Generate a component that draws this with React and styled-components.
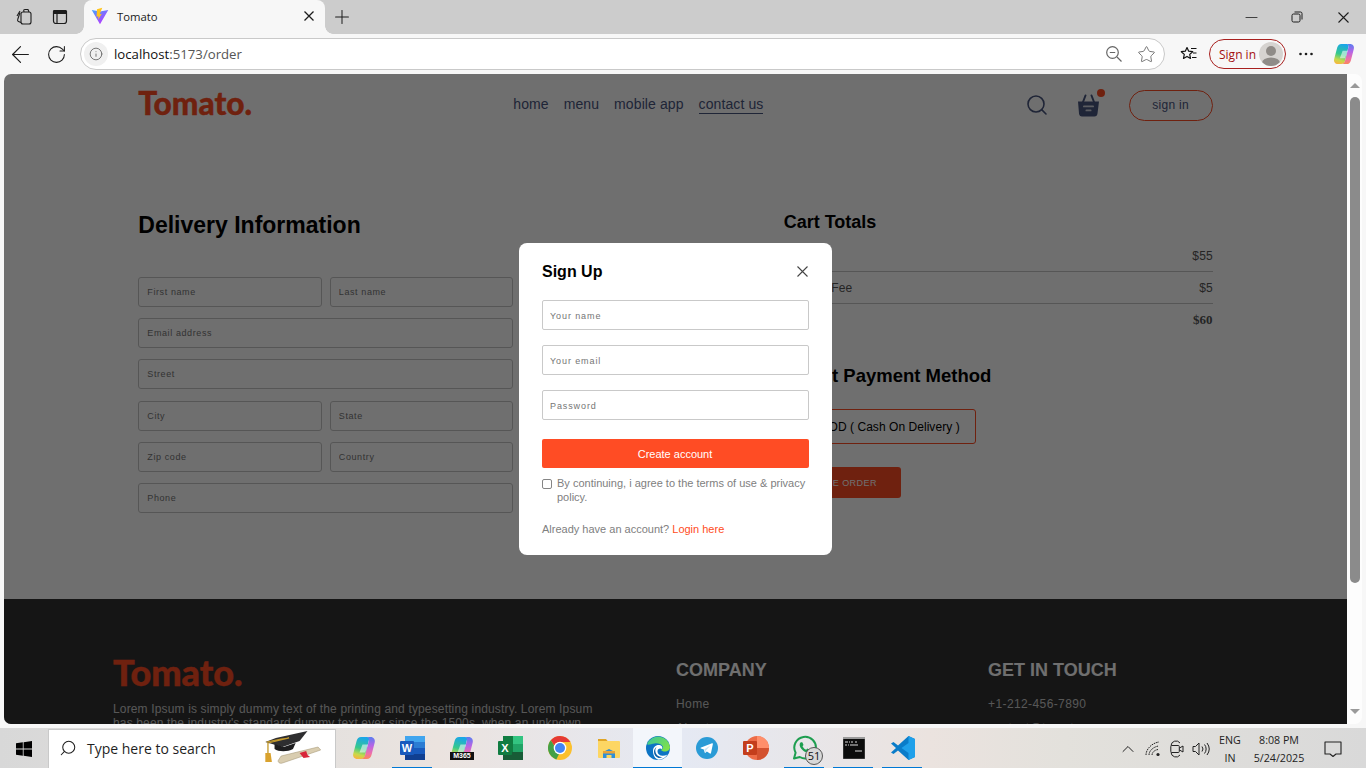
import React from 'react';
import styled, { createGlobalStyle } from 'styled-components';
import { ArrowLeft, RotateCw, Info, Star, Plus, Minus, Search, ChevronUp } from 'lucide-react';

const TOMATO = '#ff4c24';
const NAVY = '#49557e';

const GlobalStyle = createGlobalStyle`
  * { box-sizing: border-box; }
  html, body { margin: 0; padding: 0; overflow: hidden; background: #f7f7f7; }
  body { font-family: "Liberation Sans", Arial, sans-serif; }
`;

const Screen = styled.div`
  width: 1366px;
  height: 768px;
  display: flex;
  flex-direction: column;
  overflow: hidden;
`;

/* browser chrome */
const TabStrip = styled.div`
  height: 34px;
  background: #cccccc;
  display: flex;
  align-items: stretch;
  flex: none;
`;

const StripButton = styled.div`
  width: ${props => props.$w || 36}px;
  display: flex;
  align-items: center;
  justify-content: center;
  color: #1c1c1c;
`;

const StripLeft = styled.div`
  display: flex;
  width: 84px;
  padding-left: 6px;
`;

const Tab = styled.div`
  position: relative;
  width: 241px;
  background: #f7f7f7;
  border-radius: 8px 8px 0 0;
  display: flex;
  align-items: center;
  padding: 0 11px 2px 7px;
  gap: 8px;
  font: 11.3px "Open Sans", sans-serif;
  color: #1a1a1a;

  &::before, &::after {
    content: '';
    position: absolute;
    bottom: 0;
    width: 8px;
    height: 8px;
  }
  &::before {
    left: -8px;
    background: radial-gradient(circle at 0 0, transparent 7.5px, #f7f7f7 8px);
  }
  &::after {
    right: -8px;
    background: radial-gradient(circle at 100% 0, transparent 7.5px, #f7f7f7 8px);
  }
`;

const TabTitle = styled.span`
  flex: 1;
`;

const WindowButtons = styled.div`
  margin-left: auto;
  display: flex;
`;

const Toolbar = styled.div`
  height: 40px;
  flex: none;
  background: #f7f7f7;
  display: flex;
  align-items: center;
  padding: 0 4px 0 2px;
`;

const ToolButton = styled.div`
  flex: none;
  width: ${props => props.$w || 36}px;
  display: flex;
  align-items: center;
  justify-content: center;
  color: ${props => props.$color || '#1c1c1c'};
`;

const AddressBar = styled.div`
  flex: none;
  width: 1085px;
  height: 32px;
  margin: 0 6px;
  background: #fff;
  border: 1px solid #c9c9c9;
  border-radius: 16px;
  display: flex;
  align-items: center;
  padding: 0 2px 0 3px;
  font: 13.2px "Open Sans", sans-serif;
`;

const InfoBubble = styled.div`
  width: 24px;
  height: 24px;
  border-radius: 50%;
  background: #f0f0f0;
  display: flex;
  align-items: center;
  justify-content: center;
  color: #666;
  margin-right: 6px;
`;

const UrlHost = styled.span`
  color: #111;
`;

const UrlRest = styled.span`
  color: #555;
  flex: 1;
`;

const SignInPill = styled.div`
  flex: none;
  width: 77px;
  height: 30px;
  margin-left: 2px;
  border: 1px solid #a8201f;
  border-radius: 15px;
  display: flex;
  align-items: center;
  justify-content: space-between;
  padding: 0 2px 0 9px;
  font: 12px "Open Sans", sans-serif;
  color: #a30f0f;
`;

const Avatar = styled.div`
  width: 24px;
  height: 24px;
  border-radius: 50%;
  background: #d6d3d0;
  overflow: hidden;
  display: flex;
`;

/* viewport */
const Viewport = styled.div`
  flex: none;
  height: 654px;
  display: flex;
  padding: 0 4px 4px;
  background: #f7f7f7;
`;

const Page = styled.div`
  position: relative;
  width: 1343px;
  height: 650px;
  overflow: hidden;
  background: #fff;
  border-radius: 7px 0 0 7px;
`;

const Scrollbar = styled.div`
  width: 15px;
  background: #fdfdfd;
  border-radius: 0 7px 7px 0;
  display: flex;
  flex-direction: column;
  align-items: center;
  padding: 9px 0 10px;
`;

const ScrollArrow = styled.div`
  width: 0;
  height: 0;
  border-left: 5px solid transparent;
  border-right: 5px solid transparent;
  ${props => props.$up ? 'border-bottom: 5px solid #9a9a9a;' : 'border-top: 5px solid #9a9a9a;'}
`;

const ScrollThumb = styled.div`
  width: 10px;
  height: 486px;
  margin: 9px 0 auto;
  border-radius: 5px;
  background: #8b8b8b;
`;

/* site */
const Navbar = styled.nav`
  width: 80%;
  height: 62px;
  margin: 0 auto;
  display: flex;
  align-items: center;
  justify-content: space-between;
`;

const Logo = styled.div`
  font-family: Lato, sans-serif;
  font-weight: 900;
  font-size: ${props => props.$size}px;
  line-height: 1;
  -webkit-text-stroke: 0.4px ${TOMATO};
  color: ${TOMATO};
`;

const NavLogo = styled(Logo)`
  margin-bottom: 3px;
`;

const NavLinks = styled.ul`
  list-style: none;
  margin: 0;
  padding: 0;
  display: flex;
  gap: 15px;
  color: ${NAVY};
  font-size: 14px;
  letter-spacing: 0.1px;
`;

const NavLink = styled.li`
  padding-bottom: 1px;
  border-bottom: 1px solid ${props => props.$active ? NAVY : 'transparent'};
`;

const NavRight = styled.div`
  display: flex;
  align-items: center;
  gap: 29px;
`;

const NavSearch = styled(Search)`
  margin-right: -1px;
`;

const BasketWrap = styled.div`
  position: relative;
  display: flex;
`;

const BasketDot = styled.span`
  position: absolute;
  top: -5px;
  right: -5px;
  width: 8px;
  height: 8px;
  border-radius: 50%;
  background: ${TOMATO};
`;

const NavSignIn = styled.button`
  width: 84px;
  height: 31px;
  background: transparent;
  border: 1px solid ${TOMATO};
  border-radius: 50px;
  color: ${NAVY};
  font: 12px "Liberation Sans", sans-serif;
  letter-spacing: 0.3px;
  padding: 0;
`;

const OrderForm = styled.main`
  width: 80%;
  height: 463px;
  margin: 0 auto;
  padding-top: 74px;
  display: flex;
  justify-content: space-between;
  align-items: flex-start;
`;

const DeliveryColumn = styled.section`
  width: 375px;
`;

const DeliveryTitle = styled.h2`
  margin: 0 0 37px;
  font-size: 23px;
  line-height: 30px;
  font-weight: 700;
  color: #000;
`;

const Fields = styled.div`
  display: grid;
  grid-template-columns: 1fr 1fr;
  gap: 11.2px 8px;
`;

const Field = styled.input`
  width: 100%;
  height: 30px;
  grid-column: ${props => props.$wide ? '1 / -1' : 'auto'};
  border: 1px solid #c5c5c5;
  border-radius: 3px;
  background: transparent;
  padding: 0 8px;
  font: 9px "Liberation Sans", sans-serif;
  letter-spacing: 0.6px;
  outline: none;
  &::placeholder { color: #757575; opacity: 1; }
`;

const CartColumn = styled.section`
  width: 429px;
`;

const CartTitle = styled.h2`
  margin: 0;
  font-size: ${props => props.$size || 18}px;
  line-height: 24px;
  font-weight: 700;
  color: #000;
`;

const CartRows = styled.div`
  margin: 6px 0 29px;
`;

const CartRow = styled.div`
  height: ${props => props.$last ? 31 : 32}px;
  display: flex;
  align-items: center;
  justify-content: space-between;
  font-size: 12px;
  letter-spacing: 0.1px;
  color: #555;
  border-bottom: ${props => props.$last ? 'none' : '1px solid #c5c5c5'};
`;

const TotalRow = styled(CartRow)`
  font-family: "Liberation Serif", serif;
  font-weight: 700;
  font-size: 13px;
  color: #555;
`;

const PayButton = styled.div`
  width: 192px;
  height: 35px;
  margin: 21px 0 23px;
  border: 1px solid ${TOMATO};
  border-radius: 3px;
  display: flex;
  align-items: center;
  justify-content: flex-end;
  padding-right: 15px;
  font-size: 12px;
  letter-spacing: 0.05px;
  color: #000;
`;

const RadioDot = styled.span`
  width: 12px;
  height: 12px;
  border-radius: 50%;
  background: ${TOMATO};
  margin-right: 6px;
  flex: none;
`;

const PlaceOrder = styled.button`
  width: 117px;
  height: 31px;
  background: ${TOMATO};
  border: none;
  border-radius: 3px;
  color: #fff;
  font: 9px "Liberation Sans", sans-serif;
  letter-spacing: 0.45px;
  padding: 0;
`;

const Footer = styled.footer`
  background: #323232;
  color: #c8c8c8;
  height: 300px;
  padding: 55px 0 0 109px;
  display: grid;
  grid-template-columns: 483px 232px 1fr;
  column-gap: 80px;
  align-items: start;
`;

const FooterText = styled.p`
  margin: 12px 0 0;
  font-size: 12px;
  line-height: 14.4px;
  letter-spacing: 0.15px;
`;

const FooterHead = styled.h2`
  margin: 5px 0 0;
  font-size: 18px;
  line-height: 22px;
  color: #fff;
  font-weight: 700;
`;

const FooterList = styled.ul`
  list-style: none;
  margin: 16px 0 0;
  padding: 0;
  display: flex;
  flex-direction: column;
  gap: 10px;
  font-size: 12px;
  line-height: 14px;
  letter-spacing: 0.4px;
`;

const Overlay = styled.div`
  position: absolute;
  inset: 0;
  background: rgba(0, 0, 0, 0.565);
  display: grid;
  place-items: center;
`;

const Modal = styled.form`
  width: 313px;
  height: 312px;
  background: #fff;
  border-radius: 8px;
  padding: 18px 23px 0;
  display: flex;
  flex-direction: column;
`;

const ModalHead = styled.div`
  display: flex;
  align-items: center;
  justify-content: space-between;
  height: 22px;
  margin-bottom: 17px;
  color: #000;
  font-size: 16px;
  font-weight: 700;
`;

const ModalClose = styled.span`
  display: flex;
  margin: 0 1px 2px 0;
`;

const ModalFields = styled.div`
  display: flex;
  flex-direction: column;
  gap: 15px;
`;

const ModalField = styled.input`
  height: 30px;
  width: 100%;
  border: 1px solid #c9c9c9;
  border-radius: 2px;
  padding: 1px 7px 0;
  font: 9px "Liberation Sans", sans-serif;
  letter-spacing: 0.9px;
  outline: none;
  &::placeholder { color: #757575; opacity: 1; }
`;

const CreateButton = styled.button`
  height: 29px;
  margin-top: 19px;
  background: ${TOMATO};
  color: #fff;
  border: none;
  border-radius: 2px;
  font: 11px "Liberation Sans", sans-serif;
  padding: 0 1px 0 0;
`;

const Agree = styled.label`
  display: flex;
  gap: 5px;
  margin-top: 8px;
  font-size: 11px;
  line-height: 14px;
  color: #808080;
`;

const AgreeBox = styled.span`
  width: 10px;
  height: 10px;
  margin-top: 3px;
  border: 1px solid #858585;
  border-radius: 2px;
  flex: none;
`;

const LoginLine = styled.p`
  margin: 18px 0 0;
  font-size: 11px;
  line-height: 14px;
  color: #808080;
`;

const LoginLink = styled.span`
  color: ${TOMATO};
`;

/* taskbar */
const Taskbar = styled.div`
  flex: 1;
  display: flex;
  align-items: stretch;
  background: linear-gradient(90deg, #d8d8d8 0, #e6e2df 26%, #ebe3df 32%, #e5e9f3 50%, #ebe3df 68%, #e3e1dc 78%, #d9d9d9 100%);
`;

const StartButton = styled.div`
  width: 48px;
  display: flex;
  align-items: center;
  justify-content: center;
`;

const SearchBox = styled.div`
  width: 288px;
  margin-top: 1px;
  background: #fff;
  border: 1px solid #c9c9c9;
  display: flex;
  align-items: center;
  padding: 0 13px 2px 10px;
  font: 14px "Open Sans", sans-serif;
  color: #1f1f1f;
`;

const SearchText = styled.span`
  margin-left: 10px;
  flex: 1;
`;

const MirroredSearch = styled(Search)`
  transform: scaleX(-1);
`;

const TaskIcons = styled.div`
  display: flex;
  margin-left: 3px;
`;

const TaskIcon = styled.div`
  position: relative;
  width: 49px;
  display: flex;
  align-items: center;
  justify-content: center;
  padding-bottom: 2px;
  background: ${props => props.$active ? '#f3f6fb' : 'transparent'};
  &::after {
    content: '';
    display: ${props => props.$open ? 'block' : 'none'};
    position: absolute;
    left: ${props => props.$active ? 0 : 4}px;
    right: ${props => props.$active ? 0 : 5}px;
    bottom: 0;
    height: 2px;
    background: #0078d4;
  }
`;

const Badge = styled.span`
  position: absolute;
  right: 6px;
  bottom: 4px;
  width: 18px;
  height: 18px;
  border-radius: 50%;
  background: #d8d8d8;
  border: 1px solid #555;
  font: 11px "Open Sans", sans-serif;
  line-height: 16px;
  text-align: center;
  color: #111;
`;

const M365Tag = styled.span`
  position: absolute;
  left: 13px;
  bottom: 9px;
  width: 24px;
  height: 8px;
  background: #111;
  color: #fff;
  font: 700 7px/8px "Liberation Sans", sans-serif;
  text-align: center;
`;

const Tray = styled.div`
  margin-left: auto;
  display: flex;
  align-items: center;
  color: #222;
`;

const TrayItem = styled.div`
  width: ${props => props.$w}px;
  display: flex;
  align-items: center;
  justify-content: center;
`;

const TrayText = styled.div`
  width: ${props => props.$w}px;
  text-align: center;
  font: 10.7px/18px "Open Sans", sans-serif;
  color: #222;
`;

/* drawn icons */
const CloseGlyph = ({ size = 11, color = '#1c1c1c', width = 1.1 }) => (
  <svg width={size} height={size} viewBox={`0 0 ${size} ${size}`} stroke={color} strokeWidth={width} fill="none">
    <path d={`M0.500 0.500L${size - 0.5} ${size - 0.5}M${size - 0.5} 0.500L0.500 ${size - 0.5}`} />
  </svg>
);

const DotsIcon = () => (
  <svg width="14" height="4" viewBox="0 0 14 4" fill="#1c1c1c">
    <circle cx="1.500" cy="2" r="1.300" />
    <circle cx="7" cy="2" r="1.300" />
    <circle cx="12.500" cy="2" r="1.300" />
  </svg>
);

const Copilot = ({ id, size = 22 }) => (
  <svg width={size} height={size} viewBox="0 0 24 24">
    <defs>
      <linearGradient id={id + 'a'} x1="0.500" y1="0" x2="0.300" y2="1">
        <stop offset="0" stopColor="#1aa6e8" />
        <stop offset="0.5" stopColor="#35c98c" />
        <stop offset="0.8" stopColor="#c8d94a" />
        <stop offset="1" stopColor="#f9b53f" />
      </linearGradient>
      <linearGradient id={id + 'b'} x1="0.500" y1="0" x2="0.500" y2="1">
        <stop offset="0" stopColor="#5a7df0" />
        <stop offset="0.4" stopColor="#b765e6" />
        <stop offset="0.75" stopColor="#ef6fa8" />
        <stop offset="1" stopColor="#f98a5a" />
      </linearGradient>
    </defs>
    <path d="M9 1h6c1.600 0 2.500 1 2 2.600L13 20c-.6 2-2 3-4 3H5.500C2.200 23 .5 20.500 1.300 17.500L4.600 5C5.300 2.500 6.800 1 9 1z" fill={`url(#${id}a)`} />
    <path d="M15 1h3.500c3.200 0 5 2.500 4.200 5.500L19.500 19c-.7 2.500-2.300 4-4.500 4H8c2.500 0 4.200-1 5-3.500L16.800 5C17.300 3 16.800 1.500 15 1z" fill={`url(#${id}b)`} />
    <path d="M10.500 8.500h5.500l-2.700 8H7.500z" fill="#fff" opacity="0.55" />
  </svg>
);

const ViteIcon = () => (
  <svg width="18" height="18" viewBox="0 0 24 24">
    <defs>
      <linearGradient id="viteA" x1="0" y1="0" x2="0.7" y2="1">
        <stop offset="0" stopColor="#41a5ff" />
        <stop offset="1" stopColor="#bd34fe" />
      </linearGradient>
    </defs>
    <path d="M1 4l11 19L23 4l-11 2z" fill="url(#viteA)" />
    <path d="M15 1L8 3l-.6 10 2.600-.6-.6 4.600 5-8-2.800.5z" fill="#ffc51f" />
  </svg>
);

const CollectionsIcon = () => (
  <svg width="18" height="18" viewBox="0 0 18 18" fill="none" stroke="#1c1c1c" strokeWidth="1.100">
    <rect x="6" y="4" width="10" height="12" rx="2" />
    <path d="M6 14.500L3.500 13.500a1.500 1.500 0 0 1-.8-2L5 4.500M9 4l-.2-1.200C8.500 2 9 1.500 10 1.500h3l1 2.500" />
    <path d="M2 8l3-5" />
  </svg>
);

const TabsIcon = () => (
  <svg width="16" height="16" viewBox="0 0 16 16" fill="none" stroke="#1c1c1c" strokeWidth="1.200">
    <rect x="1.500" y="1.500" width="13" height="13" rx="2.500" />
    <rect x="1.500" y="1.500" width="13" height="3" rx="1" fill="#1c1c1c" />
    <path d="M5 4.500v10" />
  </svg>
);

const RestoreIcon = () => (
  <svg width="12" height="12" viewBox="0 0 12 12" fill="none" stroke="#1c1c1c">
    <rect x="1" y="3" width="8" height="8" rx="1.500" />
    <path d="M3.500 1H9.500A1.500 1.500 0 0 1 11 2.500V8.500" />
  </svg>
);

const ZoomMinus = () => (
  <svg width="18" height="18" viewBox="0 0 18 18" fill="none" stroke="currentColor" strokeWidth="1.200">
    <circle cx="7.500" cy="7.500" r="5.800" />
    <path d="M4.800 7.500h5.400M12 12l4.500 4.500" />
  </svg>
);

const FavoritesIcon = () => (
  <svg width="18" height="18" viewBox="0 0 18 18" fill="none" stroke="#111" strokeWidth="1.200">
    <path d="M7 2.500l1.700 3.700 4 .5-3 2.700.8 4-3.500-2-3.500 2 .8-4-3-2.700 4-.5z" strokeLinejoin="round" />
    <path d="M11 3.500h5.500M13 8h3.500M12 12.500h4.500" />
  </svg>
);

const ProfileIcon = () => (
  <svg width="24" height="24" viewBox="0 0 24 24" fill="#8f8b87">
    <circle cx="12" cy="9" r="5" />
    <ellipse cx="12" cy="21" rx="9" ry="5.500" />
  </svg>
);

const BasketIcon = () => (
  <svg width="23" height="23" viewBox="0 0 23 23">
    <path d="M6 8L8.500 1.500M17 8l-2.500-6.500" stroke={NAVY} strokeWidth="2" strokeLinecap="round" />
    <path d="M1 7.500h21l-1.500 12c-.2 1.800-1.300 3-3 3h-12.500c-1.700 0-2.800-1.200-3-3z" fill={NAVY} strokeLinejoin="round" />
    <rect x="6" y="11.500" width="11" height="1.800" rx="0.900" fill="#fff" opacity="0.75" />
    <rect x="8.500" y="15.500" width="6" height="1.800" rx="0.900" fill="#fff" opacity="0.75" />
  </svg>
);

const WindowsLogo = () => (
  <svg width="16" height="16" viewBox="0 0 16 16" fill="#000">
    <path d="M0 2.300l6.800-1v6.300H0zM7.600 1.200L16 0v7.600H7.600zM0 8.400h6.800v6.300l-6.800-1zM7.600 8.400H16V16l-8.400-1.200z" />
  </svg>
);

const GradCap = () => (
  <svg width="58" height="36" viewBox="14 1 44 36" preserveAspectRatio="none">
    <path d="M27 27l28-9 2 3-29 13c-2 1-4-1-3-3z" fill="#d9cdb0" stroke="#a89a7a" strokeWidth="0.500" />
    <path d="M41 24l3 5 5-1-2-2-1-4z" fill="#d8263a" />
    <path d="M15 13l8-4 24-7-6 10-13 6z" fill="#2e2e30" />
    <path d="M22 15l0 5c3 3 10 3 14 0l2-6-9 4z" fill="#1d1d1f" />
    <path d="M16 13l11-3 6-1-16 5v10" fill="none" stroke="#c49a2c" strokeWidth="1" />
    <path d="M15 24h4l1 9h-5z" fill="#d9a22e" />
  </svg>
);

const WordIcon = () => (
  <svg width="26" height="26" viewBox="0 0 26 26">
    <rect x="5" y="1" width="20" height="24" rx="1" fill="#2b7cd3" />
    <rect x="5" y="1" width="20" height="6" fill="#41a5ee" />
    <rect x="5" y="13" width="20" height="6" fill="#185abd" />
    <rect x="5" y="19" width="20" height="6" fill="#103f91" />
    <rect x="0" y="6" width="14" height="14" rx="1" fill="#185abd" />
    <text x="7" y="17" textAnchor="middle" fontFamily="Liberation Sans" fontWeight="700" fontSize="11" fill="#fff">W</text>
  </svg>
);

const ExcelIcon = () => (
  <svg width="26" height="26" viewBox="0 0 26 26">
    <rect x="5" y="1" width="20" height="24" rx="1" fill="#21a366" />
    <rect x="5" y="1" width="10" height="8" fill="#107c41" />
    <rect x="15" y="1" width="10" height="8" fill="#33c481" />
    <rect x="5" y="9" width="10" height="8" fill="#107c41" />
    <rect x="5" y="17" width="20" height="8" fill="#185c37" />
    <rect x="0" y="6" width="14" height="14" rx="1" fill="#107c41" />
    <text x="7" y="17" textAnchor="middle" fontFamily="Liberation Sans" fontWeight="700" fontSize="11" fill="#fff">X</text>
  </svg>
);

const ChromeIcon = () => (
  <svg width="24" height="24" viewBox="0 0 24 24">
    <circle cx="12" cy="12" r="12" fill="#fbc02d" />
    <path d="M12 0a12 12 0 0 1 10.400 6H12a6 6 0 0 0-5.600 3.700L2.800 4.300A12 12 0 0 1 12 0z" fill="#e53935" />
    <path d="M2.800 4.300L7 11c.4 3 2.500 5 5 5l-3.700 7.400A12 12 0 0 1 2.800 4.300z" fill="#43a047" />
    <circle cx="12" cy="12" r="6.300" fill="#fff" />
    <circle cx="12" cy="12" r="5" fill="#4285f4" />
  </svg>
);

const FolderIcon = () => (
  <svg width="24" height="24" viewBox="0 0 24 24">
    <path d="M1 3h8l2 2.500H1z" fill="#e0a526" />
    <rect x="1" y="5" width="22" height="17" rx="1" fill="#fdd663" />
    <path d="M6 16l6-3 6 3v6h-3.500v-3h-5v3H6z" fill="#2f8fd8" />
    <rect x="6" y="15" width="12" height="2.500" fill="#e8a33a" />
  </svg>
);

const EdgeIcon = () => (
  <svg width="24" height="24" viewBox="0 0 24 24">
    <defs>
      <linearGradient id="edgeA" x1="0" y1="0" x2="1" y2="0.600">
        <stop offset="0" stopColor="#36c5a0" />
        <stop offset="1" stopColor="#7ee04b" />
      </linearGradient>
    </defs>
    <circle cx="12" cy="12" r="12" fill="#0c74c4" />
    <path d="M1 8a12 12 0 0 1 23 3c0 3-2.500 4.500-5 4.500-2 0-3.500-.8-4-1.800 2-.4 2.500-2.200 1.500-3.700C15 8 12 7 8.500 7.500 5 8 2 9.500 1 8z" fill="url(#edgeA)" />
    <path d="M7 15c0-4 3-6.500 6.500-6 2.300.3 3.500 2.500 2.500 4-1.500-1-4.500-.8-4.500 2.500 0 4 5 5.500 10 3a12 12 0 0 1-9 5.200C9 23 7 19 7 15z" fill="#fff" />
    <path d="M8 16c0-2 .8-4 2.500-5-1 1.500-1.500 3-1 5 .5 3 3.500 5 7 5-1.300.6-2.600 1-4 .9C10 21 8 19 8 16z" fill="#0a5fa8" />
  </svg>
);

const TelegramIcon = () => (
  <svg width="22" height="22" viewBox="0 0 22 22">
    <circle cx="11" cy="11" r="11" fill="#2a9bd6" />
    <path d="M4.500 10.800l11.500-4.600c.6-.2 1 .1.900.9l-1.900 9c-.1.600-.6.800-1.100.5l-3-2.200-1.500 1.400c-.3.300-.6.200-.7-.2l-.9-3.200-2.900-.9c-.6-.2-.6-.5 0-.7z" fill="#fff" />
    <path d="M8.400 12.300l6-3.900-4.500 5-.6 2.500z" fill="#c7e3f3" />
  </svg>
);

const PowerPointIcon = () => (
  <svg width="26" height="26" viewBox="0 0 26 26">
    <circle cx="14" cy="13" r="12" fill="#ed6c47" />
    <path d="M14 1a12 12 0 0 1 12 12H14z" fill="#ff8f6b" />
    <path d="M14 13h12a12 12 0 0 1-12 12z" fill="#d35230" />
    <rect x="0" y="6" width="14" height="14" rx="1" fill="#c43e1c" />
    <text x="7" y="17" textAnchor="middle" fontFamily="Liberation Sans" fontWeight="700" fontSize="11" fill="#fff">P</text>
  </svg>
);

const WhatsAppIcon = () => (
  <svg width="25" height="25" viewBox="0 0 25 25" fill="none">
    <path d="M2 23.500l1.600-5.800A10.800 10.800 0 1 1 7.800 22z" stroke="#1e9e50" strokeWidth="2" strokeLinejoin="round" />
    <path d="M8.500 7.500c-1.500 1.500-1 4 1 6.500s5 4 7 3c1.200-.6 1.500-1.800 1.200-2.300l-2.500-1.200-1 1.200c-1.500-.5-3-2-3.700-3.500l1-1.100-1-2.600c-.8-.4-1.400-.4-2 0z" fill="#1e9e50" />
  </svg>
);

const CmdIcon = () => (
  <svg width="22" height="22" viewBox="0 0 22 22">
    <rect x="0" y="0" width="22" height="22" fill="#0c0c0c" stroke="#8a8a8a" strokeWidth="0.600" />
    <rect x="0" y="0" width="22" height="2" fill="#9a9a9a" />
    <path d="M2 5h3M6 5h1M8 5h2M12 5h2M2 8h2M5 8h1M7 8h8M12 14h7" stroke="#d8d8d8" strokeWidth="1.200" />
  </svg>
);

const VsCodeIcon = () => (
  <svg width="24" height="24" viewBox="0 0 24 24">
    <path d="M17.500 0L24 3v18l-6.500 3L7 14.500l-4.500 3.500L0 16.500 5 12 0 7.500 2.500 6 7 9.500z" fill="#0a7cc9" />
    <path d="M17.500 0L24 3v18l-6.500 3V17L10.500 12l7-5z" fill="#1fa0ea" />
  </svg>
);

const WifiIcon = () => (
  <svg width="18" height="18" viewBox="0 0 18 18" fill="none" stroke="#222" strokeWidth="1">
    <path d="M2 15C2 9 8 3 15 2M5 15c0-4 4-8 9.500-9M8 15c0-2.500 2.500-5 6-5.500" strokeDasharray="1.600 0.800" />
    <circle cx="14" cy="14.500" r="1.600" fill="#222" stroke="none" />
  </svg>
);

const MeetIcon = () => (
  <svg width="14" height="20" viewBox="0 0 14 20" fill="none" stroke="#222" strokeWidth="1">
    <path d="M1 6.500a5 5 0 0 1 9-2.500M1 13.500a5 5 0 0 0 9 2.500" />
    <rect x="0.800" y="6.500" width="8.500" height="7" rx="1" />
    <path d="M9.500 9l3.500-2v6l-3.500-2" />
  </svg>
);

const VolumeIcon = () => (
  <svg width="18" height="16" viewBox="0 0 18 16" fill="none" stroke="#222" strokeWidth="1">
    <path d="M1 5.500h2.500L7 2v12l-3.500-3.500H1z" strokeLinejoin="round" />
    <path d="M10 5.500a4 4 0 0 1 0 5M12.500 3.500a7 7 0 0 1 0 9M15 2a10 10 0 0 1 0 12" />
  </svg>
);

const NotifyIcon = () => (
  <svg width="18" height="18" viewBox="0 0 18 18" fill="none" stroke="#222" strokeWidth="1.100">
    <path d="M1 2h16v12h-5l-3 2.500L6 14H1z" strokeLinejoin="round" />
  </svg>
);

function App() {
  return (
    <Screen>
      <GlobalStyle />
      <TabStrip>
        <StripLeft>
          <StripButton><CollectionsIcon /></StripButton>
          <StripButton><TabsIcon /></StripButton>
        </StripLeft>
        <Tab>
          <ViteIcon />
          <TabTitle>Tomato</TabTitle>
          <CloseGlyph size={10} width={1.3} />
        </Tab>
        <StripButton $w={34}><Plus size={22} strokeWidth={1.1} /></StripButton>
        <WindowButtons>
          <StripButton $w={46}><Minus size={19} strokeWidth={1} /></StripButton>
          <StripButton $w={46}><RestoreIcon /></StripButton>
          <StripButton $w={46}><CloseGlyph /></StripButton>
        </WindowButtons>
      </TabStrip>

      <Toolbar>
        <ToolButton><ArrowLeft size={27} strokeWidth={1.05} /></ToolButton>
        <ToolButton><RotateCw size={21} strokeWidth={1.2} /></ToolButton>
        <AddressBar>
          <InfoBubble><Info size={14} strokeWidth={1.5} /></InfoBubble>
          <UrlHost>localhost</UrlHost>
          <UrlRest>:5173/order</UrlRest>
          <ToolButton $w={32} $color="#666"><ZoomMinus /></ToolButton>
          <ToolButton $w={32} $color="#666"><Star size={19} strokeWidth={1.1} /></ToolButton>
        </AddressBar>
        <ToolButton><FavoritesIcon /></ToolButton>
        <SignInPill>
          Sign in
          <Avatar><ProfileIcon /></Avatar>
        </SignInPill>
        <ToolButton $w={40}><DotsIcon /></ToolButton>
        <ToolButton $w={36}><Copilot id="cpTop" /></ToolButton>
      </Toolbar>

      <Viewport>
        <Page>
          <Navbar>
            <NavLogo $size={31.6}>Tomato.</NavLogo>
            <NavLinks>
              <NavLink>home</NavLink>
              <NavLink>menu</NavLink>
              <NavLink>mobile app</NavLink>
              <NavLink $active>contact us</NavLink>
            </NavLinks>
            <NavRight>
              <NavSearch size={24} strokeWidth={1.6} color={NAVY} />
              <BasketWrap>
                <BasketIcon />
                <BasketDot />
              </BasketWrap>
              <NavSignIn type="button">sign in</NavSignIn>
            </NavRight>
          </Navbar>

          <OrderForm>
            <DeliveryColumn>
              <DeliveryTitle>Delivery Information</DeliveryTitle>
              <Fields>
                <Field placeholder="First name" />
                <Field placeholder="Last name" />
                <Field $wide placeholder="Email address" />
                <Field $wide placeholder="Street" />
                <Field placeholder="City" />
                <Field placeholder="State" />
                <Field placeholder="Zip code" />
                <Field placeholder="Country" />
                <Field $wide placeholder="Phone" />
              </Fields>
            </DeliveryColumn>
            <CartColumn>
              <CartTitle>Cart Totals</CartTitle>
              <CartRows>
                <CartRow><span>Subtotal</span><span>$55</span></CartRow>
                <CartRow><span>Delivery Fee</span><span>$5</span></CartRow>
                <TotalRow $last><span>Total</span><span>$60</span></TotalRow>
              </CartRows>
              <CartTitle $size={18.5}>Select Payment Method</CartTitle>
              <PayButton><RadioDot />COD ( Cash On Delivery )</PayButton>
              <PlaceOrder type="button">PLACE ORDER</PlaceOrder>
            </CartColumn>
          </OrderForm>

          <Footer>
            <div>
              <Logo $size={36}>Tomato.</Logo>
              <FooterText>
                Lorem Ipsum is simply dummy text of the printing and typesetting industry. Lorem Ipsum
                has been the industry's standard dummy text ever since the 1500s, when an unknown
                printer took a galley of type and scrambled it to make a type specimen book.
              </FooterText>
            </div>
            <div>
              <FooterHead>COMPANY</FooterHead>
              <FooterList>
                <li>Home</li>
                <li>About us</li>
                <li>Delivery</li>
                <li>Privacy policy</li>
              </FooterList>
            </div>
            <div>
              <FooterHead>GET IN TOUCH</FooterHead>
              <FooterList>
                <li>+1-212-456-7890</li>
                <li>contact@tomato.com</li>
              </FooterList>
            </div>
          </Footer>

          <Overlay>
            <Modal>
              <ModalHead>
                Sign Up
                <ModalClose><CloseGlyph size={11} color="#444" /></ModalClose>
              </ModalHead>
              <ModalFields>
                <ModalField placeholder="Your name" />
                <ModalField placeholder="Your email" />
                <ModalField placeholder="Password" />
              </ModalFields>
              <CreateButton type="button">Create account</CreateButton>
              <Agree>
                <AgreeBox />
                <span>By continuing, i agree to the terms of use &amp; privacy policy.</span>
              </Agree>
              <LoginLine>Already have an account? <LoginLink>Login here</LoginLink></LoginLine>
            </Modal>
          </Overlay>
        </Page>
        <Scrollbar>
          <ScrollArrow $up />
          <ScrollThumb />
          <ScrollArrow />
        </Scrollbar>
      </Viewport>

      <Taskbar>
        <StartButton><WindowsLogo /></StartButton>
        <SearchBox>
          <MirroredSearch size={18} strokeWidth={1.4} />
          <SearchText>Type here to search</SearchText>
          <GradCap />
        </SearchBox>
        <TaskIcons>
          <TaskIcon><Copilot id="cpBar" size={24} /></TaskIcon>
          <TaskIcon $open><WordIcon /></TaskIcon>
          <TaskIcon><Copilot id="cpM365" size={24} /><M365Tag>M365</M365Tag></TaskIcon>
          <TaskIcon><ExcelIcon /></TaskIcon>
          <TaskIcon><ChromeIcon /></TaskIcon>
          <TaskIcon><FolderIcon /></TaskIcon>
          <TaskIcon $open $active><EdgeIcon /></TaskIcon>
          <TaskIcon><TelegramIcon /></TaskIcon>
          <TaskIcon><PowerPointIcon /></TaskIcon>
          <TaskIcon $open><WhatsAppIcon /><Badge>51</Badge></TaskIcon>
          <TaskIcon $open><CmdIcon /></TaskIcon>
          <TaskIcon $open><VsCodeIcon /></TaskIcon>
        </TaskIcons>
        <Tray>
          <TrayItem $w={24}><ChevronUp size={20} strokeWidth={1.2} /></TrayItem>
          <TrayItem $w={25}><WifiIcon /></TrayItem>
          <TrayItem $w={23}><MeetIcon /></TrayItem>
          <TrayItem $w={25}><VolumeIcon /></TrayItem>
          <TrayText $w={34}>ENG<br />IN</TrayText>
          <TrayText $w={64}>8:08 PM<br />5/24/2025</TrayText>
          <TrayItem $w={44}><NotifyIcon /></TrayItem>
          <TrayItem $w={11} />
        </Tray>
      </Taskbar>
    </Screen>
  );
}

export default App;
